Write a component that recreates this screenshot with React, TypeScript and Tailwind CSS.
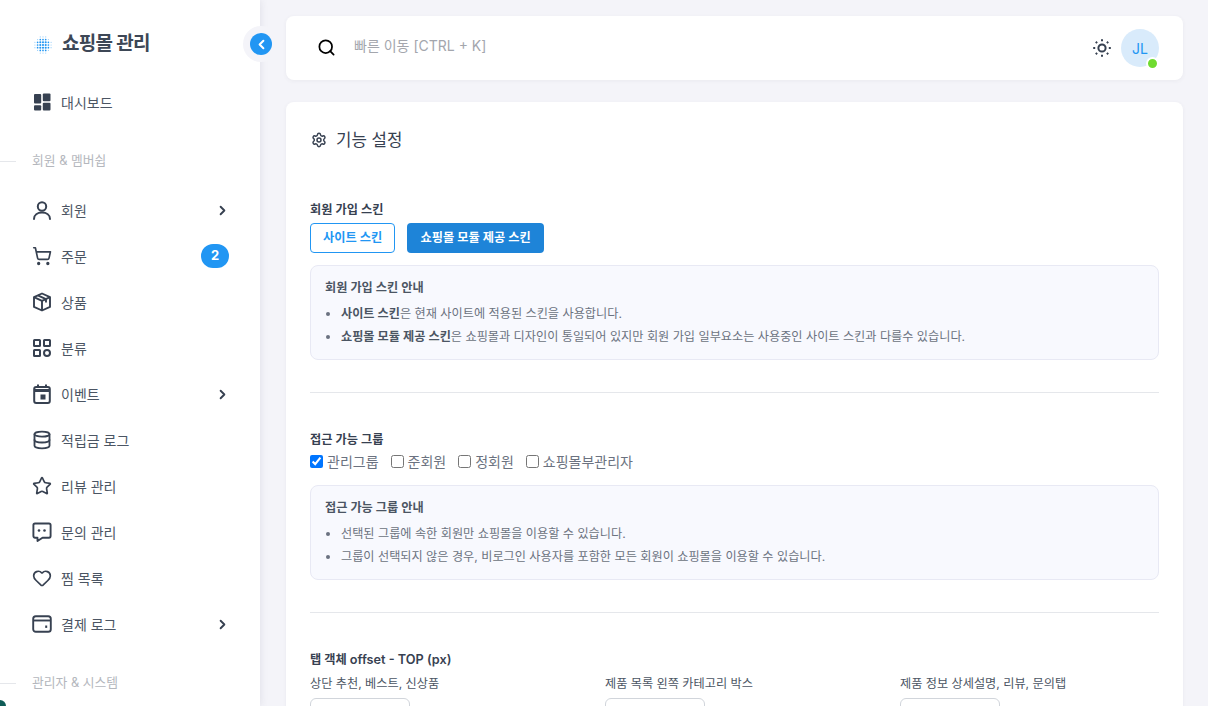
import { ChevronRight, ChevronLeft, Search, Settings, Star, Heart, Database, ShoppingCart } from "lucide-react";
import type { ReactNode } from "react";

const font = "[font-family:Inter,'Noto_Sans_CJK_KR',sans-serif]";

function Dashboard() {
  return (
    <svg width="18" height="18" viewBox="0 0 18 18" fill="currentColor">
      <rect x="1" y="1" width="7.2" height="9.4" rx="1" />
      <rect x="9.8" y="0.5" width="7.7" height="7.8" rx="1" />
      <rect x="1" y="12.2" width="7.2" height="5.3" rx="1" />
      <rect x="9.8" y="9.8" width="7.7" height="7.7" rx="1" />
    </svg>
  );
}

function Person() {
  return (
    <svg width="20" height="20" viewBox="0 0 20 20" fill="none" stroke="currentColor" strokeWidth="2">
      <circle cx="10" cy="6.5" r="4.2" />
      <path d="M2 19c0-4 3.5-6.5 8-6.5s8 2.5 8 6.5" strokeLinecap="round" />
    </svg>
  );
}

function Parcel() {
  return (
    <svg width="20" height="20" viewBox="0 0 20 20" fill="none" stroke="currentColor" strokeWidth="1.9" strokeLinejoin="round">
      <path d="M10 1.5l8 3.6v9.8l-8 3.6-8-3.6V5.1z" />
      <path d="M2 5.1l8 3.7 8-3.7M10 8.8v9.7M5.8 3.3l8.2 3.8v3.4" />
    </svg>
  );
}

function Category() {
  return (
    <svg width="18" height="18" viewBox="0 0 18 18" fill="none" stroke="currentColor" strokeWidth="2">
      <rect x="1" y="1" width="6" height="6" rx="0.5" />
      <rect x="11" y="1" width="6" height="6" rx="0.5" />
      <rect x="1" y="11" width="6" height="6" rx="0.5" />
      <circle cx="14" cy="14" r="3" />
    </svg>
  );
}

function EventIcon() {
  return (
    <svg width="18" height="20" viewBox="0 0 18 20" fill="none" stroke="currentColor" strokeWidth="2">
      <rect x="1.2" y="3" width="15.6" height="16" rx="2" />
      <path d="M1 6.5h16" strokeWidth="3" />
      <path d="M5 0.5v3M13 0.5v3" />
      <rect x="7.5" y="10.5" width="5" height="5" fill="currentColor" stroke="none" />
    </svg>
  );
}

function ChatDots() {
  return (
    <svg width="20" height="20" viewBox="0 0 20 20" fill="none" stroke="currentColor" strokeWidth="1.9" strokeLinejoin="round">
      <path d="M3 1.5h14a1.6 1.6 0 0 1 1.6 1.6v11a1.6 1.6 0 0 1-1.6 1.6h-6.5L5.5 19v-3.3H3a1.6 1.6 0 0 1-1.6-1.6v-11A1.6 1.6 0 0 1 3 1.5z" />
      <circle cx="7" cy="8.5" r="1.3" fill="currentColor" stroke="none" />
      <circle cx="12.5" cy="8.5" r="1.3" fill="currentColor" stroke="none" />
    </svg>
  );
}

function WalletIcon() {
  return (
    <svg width="20" height="20" viewBox="0 0 20 20" fill="none" stroke="currentColor" strokeWidth="1.9">
      <rect x="1.2" y="2.2" width="17.6" height="15.6" rx="2.6" />
      <path d="M1.2 6.5h17.6" />
      <path d="M14.2 11.5v2.4" strokeWidth="2" />
    </svg>
  );
}

function SunIcon() {
  return (
    <svg width="20" height="20" viewBox="0 0 20 20" fill="none" stroke="currentColor" strokeWidth="2" className="text-[#374151]">
      <circle cx="10" cy="10" r="3.6" />
      <path d="M10 1.2v2M10 16.8v2M1.2 10h2M16.8 10h2M3.8 3.8l1.3 1.3M14.9 14.9l1.3 1.3M3.8 16.2l1.3-1.3M14.9 5.1l1.3-1.3" />
    </svg>
  );
}

function LogoDots() {
  const dots = [];
  const n = 7;
  for (let r = 0; r < n; r++) {
    for (let c = 0; c < n; c++) {
      const d = Math.hypot(r - 3, c - 3);
      if (d > 3.3) continue;
      const strong = d < 2.3;
      dots.push(<circle key={`${r}-${c}`} cx={0.9 + c * 2.7} cy={0.9 + r * 2.7} r={d < 1.5 ? 1.05 : strong ? 0.85 : 0.6} fill="#2196f3" opacity={strong ? 1 : 0.45} />);
    }
  }
  return (
    <svg width="18" height="18" viewBox="0 0 18 18">
      {dots}
    </svg>
  );
}

type Item = { label: string; icon: ReactNode; arrow?: boolean; badge?: string };

const items: Item[] = [
  { label: "회원", icon: <Person />, arrow: true },
  { label: "주문", icon: <ShoppingCart size={20} strokeWidth={2} />, badge: "2" },
  { label: "상품", icon: <Parcel /> },
  { label: "분류", icon: <Category /> },
  { label: "이벤트", icon: <EventIcon />, arrow: true },
  { label: "적립금 로그", icon: <Database size={20} strokeWidth={2.2} /> },
  { label: "리뷰 관리", icon: <Star size={20} strokeWidth={2} /> },
  { label: "문의 관리", icon: <ChatDots /> },
  { label: "찜 목록", icon: <Heart size={20} strokeWidth={2} /> },
  { label: "결제 로그", icon: <WalletIcon />, arrow: true },
];

function NavRow({ item }: { item: Item }) {
  return (
    <div className="flex h-[46px] items-center pl-[32px] pr-[31px] text-[14px] text-[#4b5563]">
      <span className="flex w-[20px] justify-center text-[#374151]">{item.icon}</span>
      <span className="ml-[9px] flex-1">{item.label}</span>
      {item.arrow && <ChevronRight size={15} strokeWidth={3} className="mr-[-1px] text-[#374151]" />}
      {item.badge && (
        <span className="flex h-[24px] w-[28px] items-center justify-center rounded-full bg-[#2196f3] text-[13px] font-bold text-white">
          {item.badge}
        </span>
      )}
    </div>
  );
}

function SectionLabel({ children, className }: { children: ReactNode; className: string }) {
  return (
    <div className={`flex items-center text-[12.8px] text-[#b4b7bd] ${className}`}>
      <span className="h-px w-[16px] bg-[#e5e7eb]" />
      <span className="ml-[16px]">{children}</span>
    </div>
  );
}

function Sidebar() {
  return (
    <aside className="relative z-10 h-full w-[260px] shrink-0 bg-white shadow-[0_0_8px_rgba(60,60,90,0.12)]">
      <div className="flex h-[85px] items-center pl-[34px] pt-[4px]">
        <LogoDots />
        <span className="ml-[10px] text-[19px] font-bold tracking-[-0.7px] text-[#3d4756]">쇼핑몰 관리</span>
      </div>
      <div className="absolute left-[243px] top-[26px] flex h-[36px] w-[36px] items-center justify-center rounded-full bg-[#f4f4f9]">
        <span className="flex h-[22px] w-[22px] items-center justify-center rounded-full bg-[#2196f3]">
          <ChevronLeft size={15} strokeWidth={3.2} className="text-white" />
        </span>
      </div>
      <div className="flex h-[34px] items-center pl-[32px] pr-[31px] text-[14px] text-[#4b5563]">
        <span className="flex w-[20px] justify-center text-[#374151]"><Dashboard /></span>
        <span className="ml-[9px]">대시보드</span>
      </div>
      <SectionLabel className="mt-[32px] h-[20px]">회원 &amp; 멤버쉽</SectionLabel>
      <div className="mt-[16px]">
        {items.map((item) => (
          <NavRow key={item.label} item={item} />
        ))}
      </div>
      <SectionLabel className="mt-[26px] h-[20px]">관리자 &amp; 시스템</SectionLabel>
      <span className="absolute bottom-0 left-0 h-[6px] w-[6px] rounded-tr-full bg-[#0f5c57]" />
    </aside>
  );
}

function Topbar() {
  return (
    <header className="flex h-[64px] items-center rounded-[8px] bg-white pl-[31px] pr-[24px] shadow-[0_1px_4px_rgba(60,60,90,0.06)]">
      <Search size={19} strokeWidth={2.2} className="mb-px text-black" />
      <span className="ml-[18px] flex-1 pb-[6px] text-[14px] text-[#a3a6ad]">빠른 이동 [CTRL + K]</span>
      <SunIcon />
      <div className="relative ml-[9px] flex h-[38px] w-[38px] items-center justify-center rounded-full bg-[#d9ebfb] text-[14px] font-normal text-[#2196f3]">
        JL
        <span className="absolute bottom-[-3px] right-0 h-[13px] w-[13px] rounded-full border-[2px] border-white bg-[#6fdb2f]" />
      </div>
    </header>
  );
}

function Notice({ title, children }: { title: string; children: ReactNode }) {
  return (
    <div className="rounded-[8px] border border-[#e8e9f4] bg-[#f8f9fe] px-[14px] pt-[13px] pb-[11px] text-[12.16px] text-[#6b7280]">
      <div className="font-semibold leading-[18px] text-[#4b5563]">{title}</div>
      <ul className="mt-[5px] list-disc pl-[16px] leading-[23px]">{children}</ul>
    </div>
  );
}

function Check({ label, on }: { label: string; on?: boolean }) {
  return (
    <label className="flex items-center gap-[4px] text-[14px] text-[#6b7280]">
      <input type="checkbox" defaultChecked={on} className="h-[13px] w-[13px] accent-[#0075ff]" />
      {label}
    </label>
  );
}

function Offset({ label }: { label: string }) {
  return (
    <div>
      <div className="text-[12.16px] leading-[18px] text-[#4b5563]">{label}</div>
      <div className="mt-[5px] h-[38px] w-[100px] rounded-[6px] border border-[#d1d5db] bg-white" />
    </div>
  );
}

export default function App() {
  return (
    <div className={`flex h-screen overflow-hidden bg-[#f4f4f9] ${font}`}>
      <Sidebar />
      <main className="min-w-0 flex-1 pl-[26px] pr-[25px] pt-[16px]">
        <Topbar />
        <section className="mt-[22px] rounded-[8px] bg-white px-[24px] pt-[27px] pb-[24px] shadow-[0_1px_4px_rgba(60,60,90,0.06)]">
          <h1 className="flex items-center text-[16.8px] font-normal leading-[22px] text-[#374151]">
            <Settings size={16} strokeWidth={2.2} className="ml-px" />
            <span className="ml-[9px]">기능 설정</span>
          </h1>

          <h2 className="mt-[50px] text-[12.2px] font-semibold leading-[18px] text-[#374151]">회원 가입 스킨</h2>
          <div className="mt-[4px] flex gap-[12px]">
            <button className="h-[30px] rounded-[4px] border border-[#2196f3] bg-white px-[12px] text-[12.2px] font-semibold text-[#2196f3]">사이트 스킨</button>
            <button className="h-[30px] w-[137px] rounded-[4px] bg-[#1e84d8] text-[12.2px] font-semibold text-white">쇼핑몰 모듈 제공 스킨</button>
          </div>
          <div className="mt-[12px]">
            <Notice title="회원 가입 스킨 안내">
              <li><b className="font-semibold text-[#4b5563]">사이트 스킨</b>은 현재 사이트에 적용된 스킨을 사용합니다.</li>
              <li><b className="font-semibold text-[#4b5563]">쇼핑몰 모듈 제공 스킨</b>은 쇼핑몰과 디자인이 통일되어 있지만 회원 가입 일부요소는 사용중인 사이트 스킨과 다를수 있습니다.</li>
            </Notice>
          </div>

          <hr className="mt-[32px] border-[#e5e7eb]" />

          <h2 className="mt-[38px] text-[12.2px] font-semibold leading-[18px] text-[#374151]">접근 가능 그룹</h2>
          <div className="mt-[2px] flex gap-[12px]">
            <Check label="관리그룹" on />
            <Check label="준회원" />
            <Check label="정회원" />
            <Check label="쇼핑몰부관리자" />
          </div>
          <div className="mt-[13px]">
            <Notice title="접근 가능 그룹 안내">
              <li>선택된 그룹에 속한 회원만 쇼핑몰을 이용할 수 있습니다.</li>
              <li>그룹이 선택되지 않은 경우, 비로그인 사용자를 포함한 모든 회원이 쇼핑몰을 이용할 수 있습니다.</li>
            </Notice>
          </div>

          <hr className="mt-[32px] border-[#e5e7eb]" />

          <h2 className="mt-[38px] text-[12.2px] font-semibold leading-[18px] text-[#374151]">
            탭 객체 <span className="text-[12.7px]">offset - TOP (px)</span>
          </h2>
          <div className="mt-[6px] flex gap-[12px]">
            <div className="w-[283px] shrink-0"><Offset label="상단 추천, 베스트, 신상품" /></div>
            <div className="w-[283px] shrink-0"><Offset label="제품 목록 왼쪽 카테고리 박스" /></div>
            <div className="w-[259px] shrink-0"><Offset label="제품 정보 상세설명, 리뷰, 문의탭" /></div>
          </div>
        </section>
      </main>
    </div>
  );
}
